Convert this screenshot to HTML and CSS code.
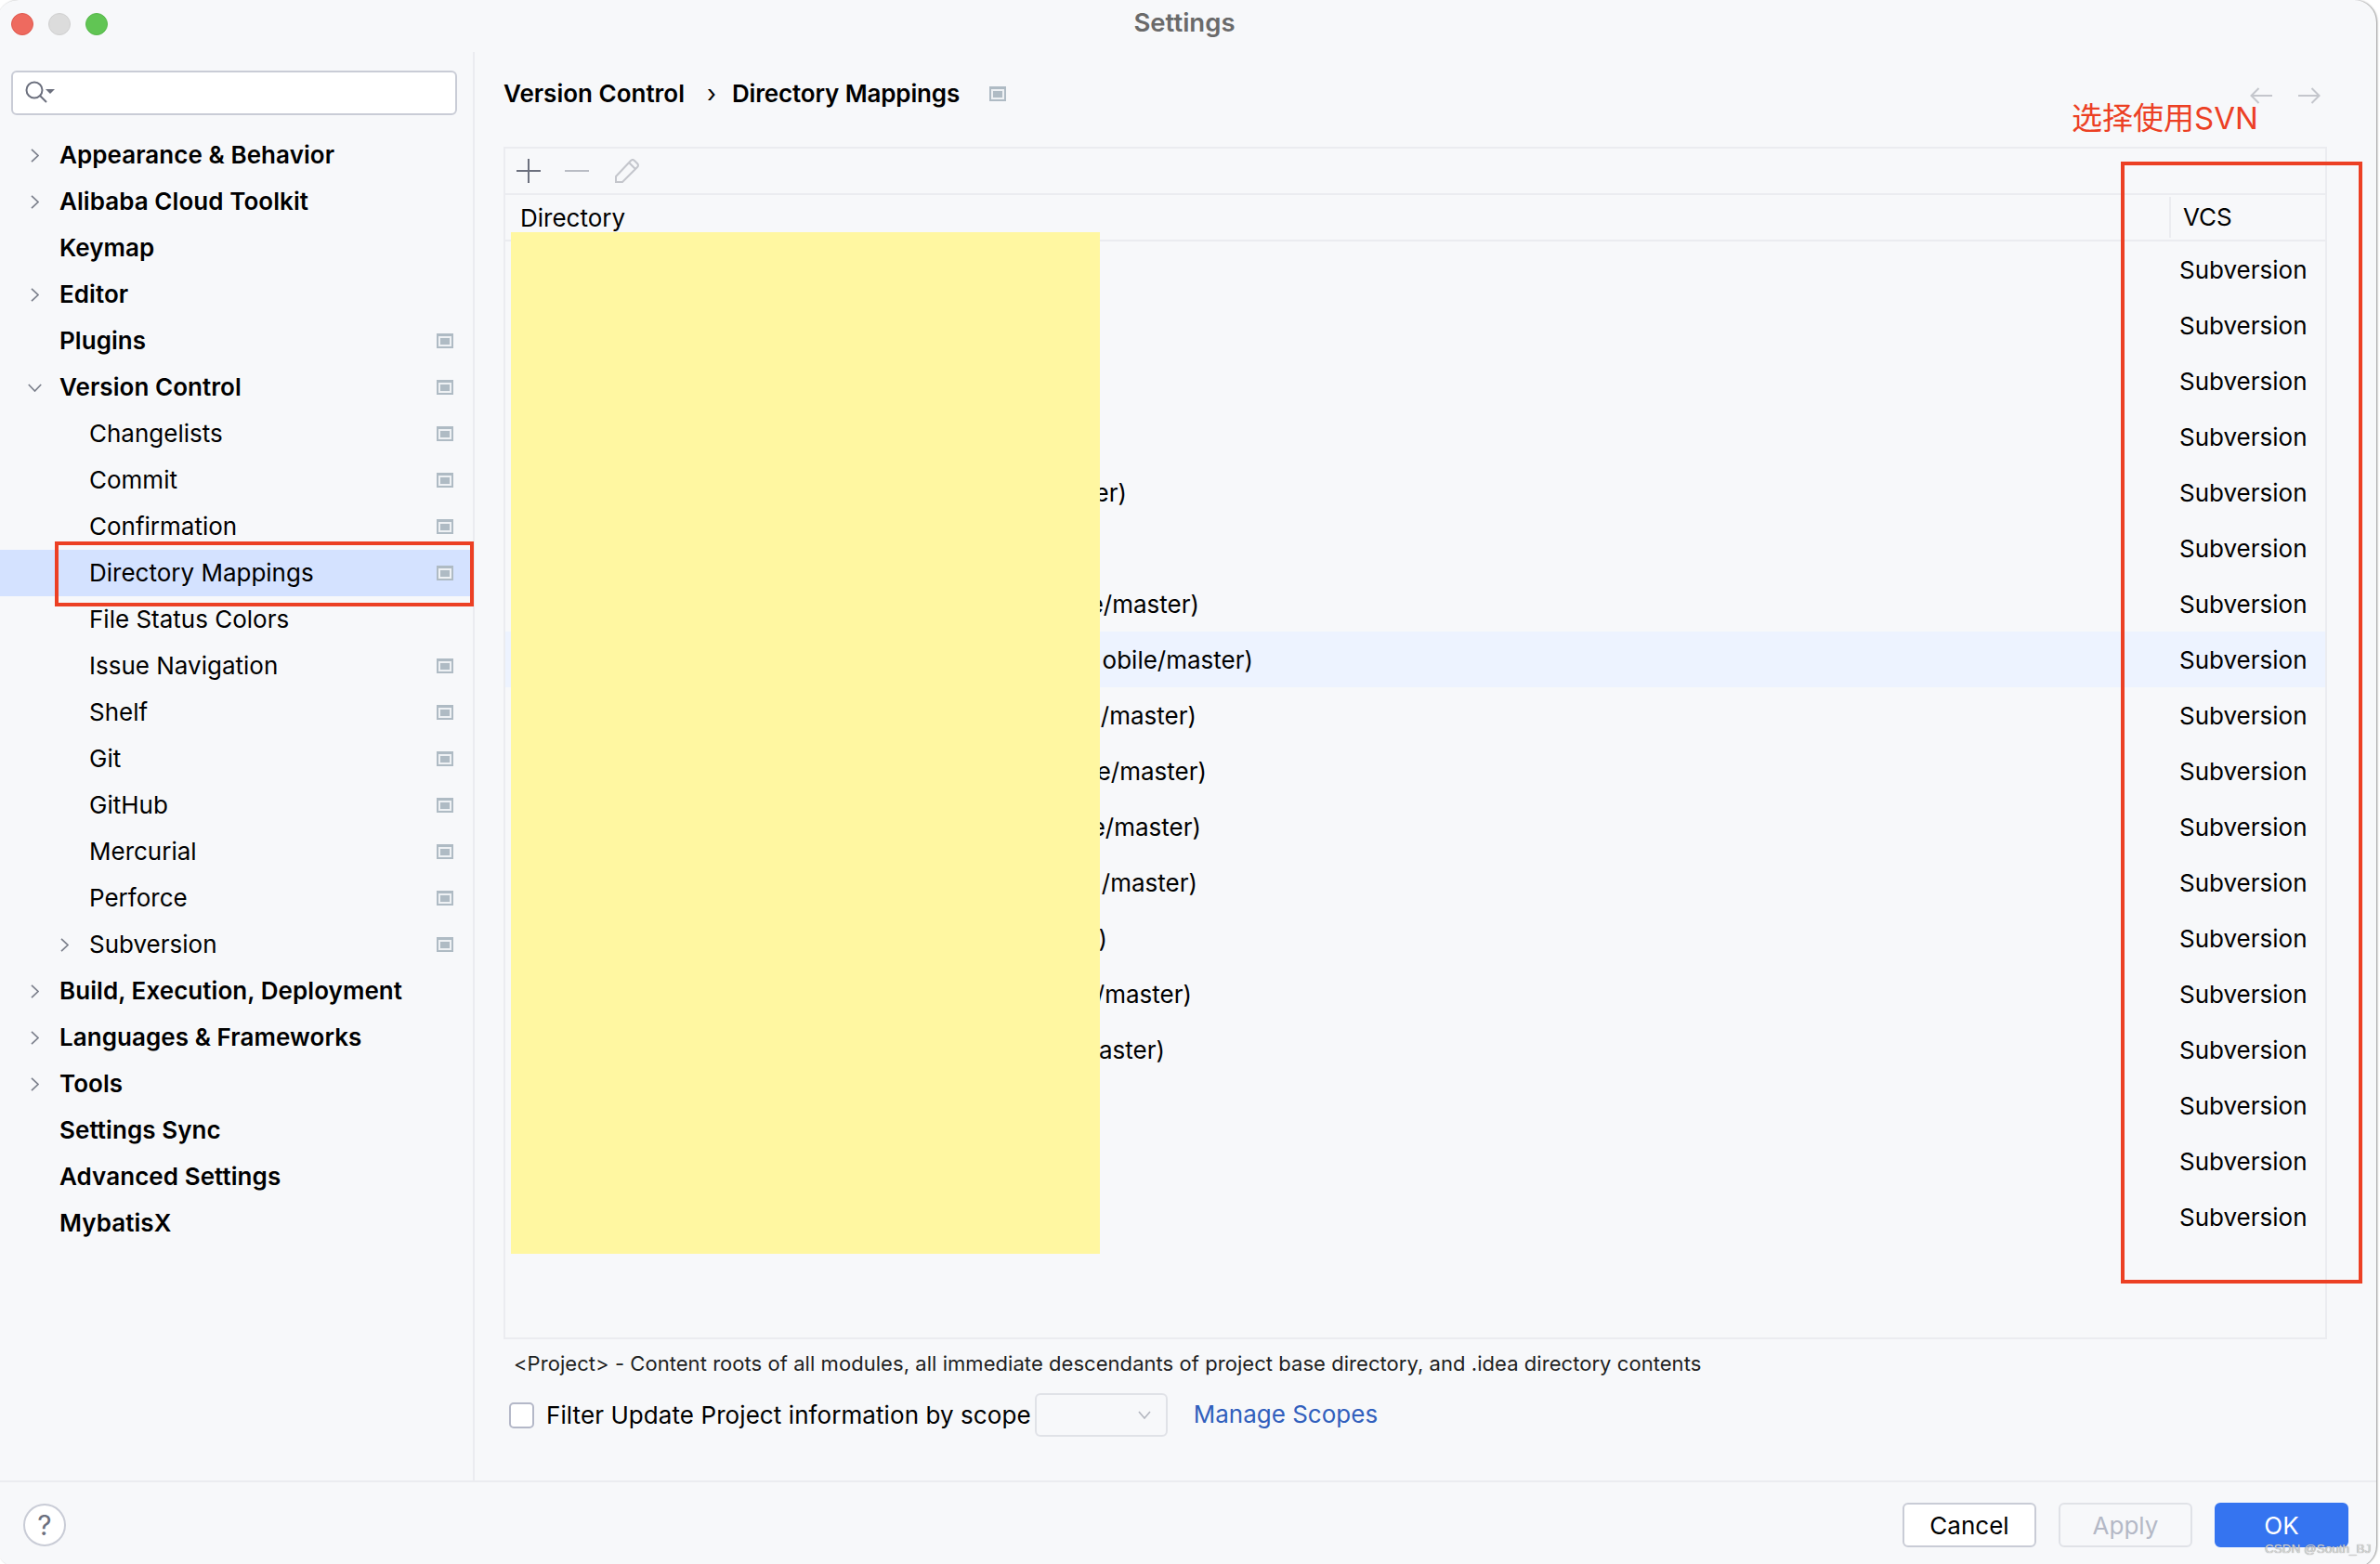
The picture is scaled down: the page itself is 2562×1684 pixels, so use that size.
FILE: index.html
```html
<!DOCTYPE html>
<html lang="en">
<head>
    <meta charset="UTF-8">
    <title>Settings</title>
    <link rel="stylesheet" href="styles.css">
</head>
<body>
    <svg class="defs" width="0" height="0">
        <symbol id="pin" viewBox="0 0 18 16">
            <rect width="18" height="16" fill="#afbbc4"/>
            <rect x="2" y="3" width="14" height="11" fill="#eef1f4"/>
            <rect x="4" y="5" width="10" height="7" fill="#afbbc4"/>
        </symbol>
        <symbol id="chev-right" viewBox="0 0 9 15">
            <path d="M1 0.8 L8 7.5 L1 14.2" fill="none" stroke="#7c808c" stroke-width="1.7"/>
        </symbol>
        <symbol id="chev-down" viewBox="0 0 15 9">
            <path d="M0.8 1 L7.5 8 L14.2 1" fill="none" stroke="#7c808c" stroke-width="1.7"/>
        </symbol>
    </svg>

    <div class="window">
        <div class="titlebar">
            <div class="lights">
                <span class="light red"></span>
                <span class="light gray"></span>
                <span class="light green"></span>
            </div>
            <div class="title">Settings</div>
        </div>

        <div class="content">
            <!-- left tree -->
            <div class="sidebar">
                <div class="search">
                    <svg width="34" height="26" viewBox="0 0 34 26">
                        <circle cx="11" cy="10" r="8.5" fill="none" stroke="#6c707e" stroke-width="2"/>
                        <path d="M17 16 L24 23" stroke="#6c707e" stroke-width="2"/>
                        <path d="M23 9 H33 L28 14 Z" fill="#6c707e"/>
                    </svg>
                </div>
                <div class="tree">
                    <div class="row top"><span class="slot"><svg class="chev" width="9" height="15"><use href="#chev-right"/></svg></span><span class="name">Appearance &amp; Behavior</span></div>
                    <div class="row top"><span class="slot"><svg class="chev" width="9" height="15"><use href="#chev-right"/></svg></span><span class="name">Alibaba Cloud Toolkit</span></div>
                    <div class="row top"><span class="slot"></span><span class="name">Keymap</span></div>
                    <div class="row top"><span class="slot"><svg class="chev" width="9" height="15"><use href="#chev-right"/></svg></span><span class="name">Editor</span></div>
                    <div class="row top"><span class="slot"></span><span class="name">Plugins</span><svg class="pin" width="18" height="16"><use href="#pin"/></svg></div>
                    <div class="row top"><span class="slot open"><svg width="15" height="9"><use href="#chev-down"/></svg></span><span class="name">Version Control</span><svg class="pin" width="18" height="16"><use href="#pin"/></svg></div>
                    <div class="row child"><span class="slot"></span><span class="name">Changelists</span><svg class="pin" width="18" height="16"><use href="#pin"/></svg></div>
                    <div class="row child"><span class="slot"></span><span class="name">Commit</span><svg class="pin" width="18" height="16"><use href="#pin"/></svg></div>
                    <div class="row child"><span class="slot"></span><span class="name">Confirmation</span><svg class="pin" width="18" height="16"><use href="#pin"/></svg></div>
                    <div class="row child selected"><span class="slot"></span><span class="name">Directory Mappings</span><svg class="pin" width="18" height="16"><use href="#pin"/></svg></div>
                    <div class="row child"><span class="slot"></span><span class="name">File Status Colors</span></div>
                    <div class="row child"><span class="slot"></span><span class="name">Issue Navigation</span><svg class="pin" width="18" height="16"><use href="#pin"/></svg></div>
                    <div class="row child"><span class="slot"></span><span class="name">Shelf</span><svg class="pin" width="18" height="16"><use href="#pin"/></svg></div>
                    <div class="row child"><span class="slot"></span><span class="name">Git</span><svg class="pin" width="18" height="16"><use href="#pin"/></svg></div>
                    <div class="row child"><span class="slot"></span><span class="name">GitHub</span><svg class="pin" width="18" height="16"><use href="#pin"/></svg></div>
                    <div class="row child"><span class="slot"></span><span class="name">Mercurial</span><svg class="pin" width="18" height="16"><use href="#pin"/></svg></div>
                    <div class="row child"><span class="slot"></span><span class="name">Perforce</span><svg class="pin" width="18" height="16"><use href="#pin"/></svg></div>
                    <div class="row child"><span class="slot"><svg class="chev" width="9" height="15"><use href="#chev-right"/></svg></span><span class="name">Subversion</span><svg class="pin" width="18" height="16"><use href="#pin"/></svg></div>
                    <div class="row top"><span class="slot"><svg class="chev" width="9" height="15"><use href="#chev-right"/></svg></span><span class="name">Build, Execution, Deployment</span></div>
                    <div class="row top"><span class="slot"><svg class="chev" width="9" height="15"><use href="#chev-right"/></svg></span><span class="name">Languages &amp; Frameworks</span></div>
                    <div class="row top"><span class="slot"><svg class="chev" width="9" height="15"><use href="#chev-right"/></svg></span><span class="name">Tools</span></div>
                    <div class="row top"><span class="slot"></span><span class="name">Settings Sync</span></div>
                    <div class="row top"><span class="slot"></span><span class="name">Advanced Settings</span></div>
                    <div class="row top"><span class="slot"></span><span class="name">MybatisX</span></div>
                </div>
            </div>

            <!-- right panel -->
            <div class="main">
                <div class="crumbs">
                    <span class="crumb">Version Control</span>
                    <span class="crumb-sep">›</span>
                    <span class="crumb tight">Directory Mappings</span>
                    <svg class="crumb-pin" width="18" height="16"><use href="#pin"/></svg>
                    <div class="nav-arrows">
                        <svg width="24" height="18" viewBox="0 0 24 18"><path d="M24 9 H1.5 M9.5 1 L1.5 9 L9.5 17" fill="none" stroke="#c4c6cc" stroke-width="2"/></svg>
                        <svg width="24" height="18" viewBox="0 0 24 18"><path d="M0 9 H22.5 M14.5 1 L22.5 9 L14.5 17" fill="none" stroke="#c4c6cc" stroke-width="2"/></svg>
                    </div>
                </div>

                <div class="panel">
                    <div class="toolbar">
                        <svg width="26" height="26" viewBox="0 0 26 26"><path d="M13 0 V26 M0 13 H26" stroke="#6c707e" stroke-width="2"/></svg>
                        <svg width="26" height="26" viewBox="0 0 26 26"><path d="M0 13 H26" stroke="#b9bcc4" stroke-width="2"/></svg>
                        <svg class="edit" width="26" height="26" viewBox="0 0 26 26"><path d="M1 25 V19 L17 2 Q19 0 21 2 L24 5 Q26 7 24 9 L8 25 Z M15 4 L22 11" fill="none" stroke="#c4c6cc" stroke-width="2"/></svg>
                    </div>
                    <div class="thead">
                        <div class="th-dir">Directory</div>
                        <div class="th-vcs">VCS</div>
                    </div>
                    <div class="tr"><div class="dir"></div><div class="vcs">Subversion</div></div>
                    <div class="tr"><div class="dir"></div><div class="vcs">Subversion</div></div>
                    <div class="tr"><div class="dir"></div><div class="vcs">Subversion</div></div>
                    <div class="tr"><div class="dir"></div><div class="vcs">Subversion</div></div>
                    <div class="tr"><div class="dir end-a">er)</div><div class="vcs">Subversion</div></div>
                    <div class="tr"><div class="dir"></div><div class="vcs">Subversion</div></div>
                    <div class="tr"><div class="dir end-b">e/master)</div><div class="vcs">Subversion</div></div>
                    <div class="tr hover"><div class="dir end-c">obile/master)</div><div class="vcs">Subversion</div></div>
                    <div class="tr"><div class="dir end-d">/master)</div><div class="vcs">Subversion</div></div>
                    <div class="tr"><div class="dir end-e">e/master)</div><div class="vcs">Subversion</div></div>
                    <div class="tr"><div class="dir end-f">e/master)</div><div class="vcs">Subversion</div></div>
                    <div class="tr"><div class="dir end-g">/master)</div><div class="vcs">Subversion</div></div>
                    <div class="tr"><div class="dir end-h">)</div><div class="vcs">Subversion</div></div>
                    <div class="tr"><div class="dir end-i">/master)</div><div class="vcs">Subversion</div></div>
                    <div class="tr"><div class="dir end-j">aster)</div><div class="vcs">Subversion</div></div>
                    <div class="tr"><div class="dir"></div><div class="vcs">Subversion</div></div>
                    <div class="tr"><div class="dir"></div><div class="vcs">Subversion</div></div>
                    <div class="tr"><div class="dir"></div><div class="vcs">Subversion</div></div>
                </div>

                <p class="hint">&lt;Project&gt; - Content roots of all modules, all immediate descendants of project base directory, and .idea directory contents</p>

                <div class="filter">
                    <span class="checkbox"></span>
                    <span class="filter-label">Filter Update Project information by scope</span>
                    <span class="combo">
                        <svg width="14" height="9" viewBox="0 0 14 9"><path d="M1 1 L7 8 L13 1" fill="none" stroke="#b4b7c0" stroke-width="1.6"/></svg>
                    </span>
                    <span class="link">Manage Scopes</span>
                </div>
            </div>
        </div>

        <div class="footer">
            <span class="help">?</span>
            <div class="buttons">
                <span class="btn">Cancel</span>
                <span class="btn disabled">Apply</span>
                <span class="btn primary">OK</span>
            </div>
        </div>
    </div>

    <!-- things pasted on top of the screenshot -->
    <div class="redact"></div>
    <div class="mark mark-row"></div>
    <div class="mark mark-col"></div>
    <div class="mark-text">选择使用SVN</div>
    <div class="watermark">CSDN @South_BJ</div>
</body>
</html>
```

FILE: styles.css
```css
html, body {
    margin: 0;
    height: 1684px;
    overflow: hidden;
    background-color: #fff;
}
body {
    position: relative;
    font-family: Inter, "Noto Sans", sans-serif;
    font-size: 26px;
    color: #000;
}
.defs {
    position: absolute;
}
.window {
    display: flex;
    flex-direction: column;
    width: 2562px;
    height: 1688px;
    margin-left: -4px;
    background-color: #f7f8fa;
    border-radius: 24px;
    box-shadow: 1px 0 2px #8f8f8f;
    overflow: hidden;
}

/* title bar */
.titlebar {
    position: relative;
    display: flex;
    align-items: center;
    height: 50px;
    margin-bottom: 6px;
    padding-left: 16px;
    flex: none;
}
.lights {
    display: flex;
    gap: 16px;
    margin-top: 2px;
}
.light {
    width: 24px;
    height: 24px;
    border-radius: 50%;
    box-sizing: border-box;
}
.light.red {
    background-color: #ee6a5f;
    border: 1px solid #e0584d;
}
.light.gray {
    background-color: #dcdcdc;
    border: 1px solid #d0d0d0;
}
.light.green {
    background-color: #61c554;
    border: 1px solid #57b84b;
}
.title {
    position: absolute;
    left: 0;
    right: 4px;
    top: 6px;
    text-align: center;
    font-size: 27.5px;
    line-height: 36px;
    font-weight: 600;
    color: #6a6a6a;
}

.content {
    display: flex;
    flex: 1;
    min-height: 0;
}

/* sidebar */
.sidebar {
    width: 515px;
    box-sizing: border-box;
    border-right: 2px solid #ebecf0;
    flex: none;
}
.search {
    display: flex;
    align-items: center;
    width: 480px;
    height: 48px;
    box-sizing: border-box;
    margin: 20px 0 18px 16px;
    padding-left: 12px;
    background-color: #fff;
    border: 2px solid #c9ccd6;
    border-radius: 6px;
}
.row {
    display: flex;
    align-items: center;
    height: 50px;
    padding-right: 21px;
    line-height: 50px;
}
.row.top {
    padding-left: 37px;
}
.row.top .name {
    font-weight: 600;
    letter-spacing: 0.06px;
}
.row.child {
    padding-left: 69px;
}
.row.selected {
    background-color: #d4e2ff;
}
.slot {
    display: flex;
    align-items: center;
    width: 31px;
    height: 100%;
    flex: none;
}
.slot.open {
    margin-left: -3px;
    width: 34px;
}
.name {
    flex: 1;
    white-space: nowrap;
}
.pin {
    flex: none;
    margin-bottom: 1px;
}

/* main panel */
.main {
    display: flex;
    flex-direction: column;
    flex: 1;
    min-width: 0;
    padding: 0 53px 47px 31px;
}
.crumbs {
    display: flex;
    align-items: center;
    height: 88px;
    margin-bottom: 14px;
    flex: none;
}
.crumb {
    font-weight: 600;
}
.crumb.tight {
    letter-spacing: -0.15px;
}
.crumb-sep {
    margin: 0 17px 0 24px;
    font-weight: 400;
}
.crumb-pin {
    margin-left: 32px;
    margin-top: 1px;
}
.nav-arrows {
    display: flex;
    gap: 28px;
    margin-left: auto;
    margin-right: 7px;
    margin-top: 6px;
}
.panel {
    flex: 1;
    border: 2px solid #ebecf0;
    min-height: 0;
}
.toolbar {
    display: flex;
    align-items: center;
    gap: 26px;
    height: 48px;
    padding-left: 12px;
    border-bottom: 2px solid #ebecf0;
}
.toolbar .edit {
    margin-left: 2px;
}
.thead {
    display: flex;
    align-items: center;
    height: 48px;
    border-bottom: 2px solid #ebecf0;
}
.th-dir {
    flex: 1;
    padding-left: 16px;
}
.th-vcs {
    width: 168px;
    height: 44px;
    line-height: 44px;
    box-sizing: border-box;
    padding-left: 13px;
    border-left: 2px solid #ebecf0;
}
.tr {
    display: flex;
    height: 60px;
    line-height: 62px;
}
.tr.hover {
    background-color: #edf3ff;
}
.dir {
    flex: 1;
}
.vcs {
    width: 168px;
    box-sizing: border-box;
    padding-left: 11px;
    flex: none;
}

/* directory text is covered by the yellow block, only the tail shows */
.end-a, .end-b, .end-c, .end-d, .end-e,
.end-f, .end-g, .end-h, .end-i, .end-j {
    flex: none;
    margin-right: auto;
    text-align: right;
    white-space: nowrap;
}
.end-a { width: 669px; }
.end-b { width: 747px; }
.end-c { width: 805px; }
.end-d { width: 744px; }
.end-e { width: 755px; }
.end-f { width: 749px; }
.end-g { width: 745px; }
.end-h { width: 648px; }
.end-i { width: 739px; }
.end-j { width: 710px; }

.hint {
    margin: 11px 0 0 11px;
    font-size: 22px;
    letter-spacing: 0.05px;
    line-height: 30px;
    color: #1e1f22;
    flex: none;
}
.filter {
    display: flex;
    align-items: center;
    height: 47px;
    margin-top: 17px;
    flex: none;
}
.checkbox {
    width: 27px;
    height: 28px;
    box-sizing: border-box;
    margin-left: 6px;
    background-color: #fff;
    border: 2px solid #b4b8c8;
    border-radius: 5px;
}
.filter-label {
    margin-left: 13px;
    letter-spacing: 0.08px;
}
.combo {
    display: flex;
    align-items: center;
    justify-content: flex-end;
    width: 143px;
    height: 47px;
    box-sizing: border-box;
    margin-left: 4px;
    padding-right: 16px;
    border: 2px solid #e0e2e7;
    border-radius: 6px;
}
.link {
    margin-left: 28px;
    margin-bottom: 2px;
    color: #315fbd;
}

/* footer */
.footer {
    display: flex;
    align-items: flex-start;
    justify-content: space-between;
    height: 94px;
    box-sizing: border-box;
    padding: 22px 30px 0 29px;
    border-top: 2px solid #ebecf0;
    flex: none;
}
.help {
    width: 46px;
    height: 46px;
    margin-top: 1px;
    box-sizing: border-box;
    text-align: center;
    line-height: 42px;
    font-size: 30px;
    color: #6c707e;
    background-color: #fff;
    border: 2px solid #c9ccd6;
    border-radius: 50%;
}
.buttons {
    display: flex;
    gap: 24px;
}
.btn {
    width: 144px;
    height: 48px;
    box-sizing: border-box;
    text-align: center;
    line-height: 46px;
    background-color: #fff;
    border: 2px solid #c9ccd6;
    border-radius: 6px;
}
.btn.disabled {
    color: #b4b8c6;
    background-color: transparent;
    border-color: #e0e2e7;
}
.btn.primary {
    color: #fff;
    background-color: #3574f0;
    border-color: #3574f0;
}

/* overlays */
.redact {
    position: absolute;
    left: 550px;
    top: 250px;
    width: 634px;
    height: 1100px;
    background-color: #fff7a1;
}
.mark {
    position: absolute;
    box-sizing: border-box;
    border: 4px solid #ec4024;
}
.mark-row {
    left: 59px;
    top: 583px;
    width: 451px;
    height: 70px;
}
.mark-col {
    left: 2283px;
    top: 174px;
    width: 260px;
    height: 1208px;
}
.mark-text {
    position: absolute;
    left: 2230px;
    top: 104px;
    font-family: Inter, "Noto Sans CJK SC", sans-serif;
    font-size: 33px;
    line-height: 46px;
    color: #ec4024;
}
.watermark {
    position: absolute;
    left: 2438px;
    top: 1659px;
    font-family: "Liberation Sans", sans-serif;
    font-size: 13.5px;
    line-height: 18px;
    white-space: nowrap;
    color: #d6d6d6;
    text-shadow: 0 0 1px #777;
}
```
